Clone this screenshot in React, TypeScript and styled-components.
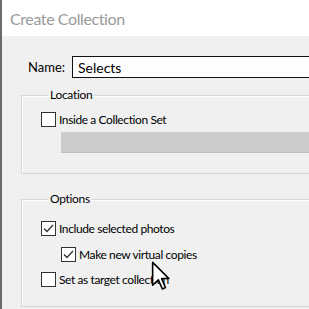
import React from 'react'
import styled, { createGlobalStyle } from 'styled-components'

const GlobalStyle = createGlobalStyle`
  html, body {
    margin: 0;
    padding: 0;
    background: #f0f0f0;
  }
`

const Window = styled.div`
  position: relative;
  width: 309px;
  height: 309px;
  overflow: hidden;
  box-sizing: border-box;
  border-left: 2px solid #6b6b6b;
  background: #f0f0f0;
  font-family: Lato, 'Open Sans', sans-serif;
  color: #000;
`

const TitleBar = styled.div`
  height: 36px;
  background: #fff;
  display: flex;
  align-items: center;
  padding-left: 8px;
  font-size: 16px;
  letter-spacing: -0.4px;
  color: #9a9a9a;
`

const Body = styled.div`
  display: flex;
  flex-direction: column;
  padding: 20px 0 0 19px;
`

const NameRow = styled.div`
  display: flex;
  align-items: center;
  padding-left: 7px;
  gap: 7px;
  font-size: 13px;
`

const TextInput = styled.div`
  flex-shrink: 0;
  width: 400px;
  height: 20px;
  border: 1px solid #111;
  background: #fdfdfd;
  display: flex;
  align-items: center;
  padding-left: 5px;
  font-size: 14px;
`

const Group = styled.fieldset<{ $top: number; $pad: number }>`
  margin: ${(p) => p.$top}px 0 0 0;
  width: 400px;
  border: 1px solid #d6d6d6;
  box-shadow: inset 1px 1px 0 #fff;
  padding: ${(p) => p.$pad}px 0 0 19px;
  display: flex;
  flex-direction: column;
  font-size: 12px;
`

const Legend = styled.legend`
  margin-left: 7px;
  padding: 0 2px;
  font-size: 12px;
  line-height: 14px;
  letter-spacing: -0.3px;
`

const CheckRow = styled.div<{ $indent?: number; $after: number }>`
  display: flex;
  align-items: center;
  gap: 3px;
  margin-left: ${(p) => p.$indent ?? 0}px;
  margin-bottom: ${(p) => p.$after}px;
  font-size: 12px;
  letter-spacing: -0.4px;
  height: 15px;
`

const Box = styled.span`
  width: 13px;
  height: 13px;
  border: 1px solid #333;
  background: #fff;
  display: flex;
  align-items: center;
  justify-content: center;
  flex-shrink: 0;
`

const GrayBar = styled.div`
  margin: 5px 0 20px 20px;
  height: 20px;
  background: #cccccc;
  border-bottom: 1px solid #c0c0c0;
`

const Cursor = styled.svg`
  position: absolute;
  left: 149px;
  top: 261px;
`

const Check = ({ on }: { on?: boolean }) => (
  <Box>
    {on && (
      <svg width="11" height="9" viewBox="0 0 11 9">
        <polyline points="1,4.5 4,7.5 10,1" fill="none" stroke="#333" strokeWidth="1.3" />
      </svg>
    )}
  </Box>
)

export default function App() {
  return (
    <>
      <GlobalStyle />
      <Window>
        <TitleBar>Create Collection</TitleBar>
        <Body>
          <NameRow>
            Name:
            <TextInput>Selects</TextInput>
          </NameRow>
          <Group $top={10} $pad={10}>
            <Legend>Location</Legend>
            <CheckRow $after={0}>
              <Check />
              Inside a Collection Set
            </CheckRow>
            <GrayBar />
          </Group>
          <Group $top={18} $pad={15}>
            <Legend>Options</Legend>
            <CheckRow $after={11}>
              <Check on />
              Include selected photos
            </CheckRow>
            <CheckRow $indent={20} $after={10}>
              <Check on />
              Make new virtual copies
            </CheckRow>
            <CheckRow $after={19}>
              <Check />
              Set as target collection
            </CheckRow>
          </Group>
        </Body>
        <Cursor width="19" height="30" viewBox="0 0 13 21">
          <path
            d="M1 1 L1 17 L5 13.2 L7.8 19.6 L10 18.6 L7.3 12.3 L12.4 12.3 Z"
            fill="#fff"
            stroke="#000"
            strokeWidth="1.1"
            strokeLinejoin="round"
          />
        </Cursor>
      </Window>
    </>
  )
}
